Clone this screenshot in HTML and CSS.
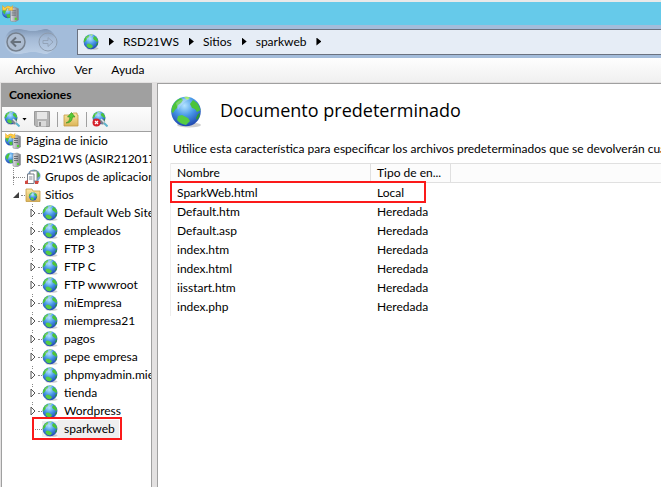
FILE: index.html
```html
<!DOCTYPE html>
<html lang="es">
<head>
<meta charset="utf-8">
<title>Administrador de Internet Information Services</title>
<link rel="stylesheet" href="styles.css">
</head>
<body>
<svg class="defs" aria-hidden="true">
  <defs>
    <radialGradient id="sea" cx="0.45" cy="0.3" r="0.75">
      <stop offset="0" stop-color="#b4e4ff"/><stop offset="0.45" stop-color="#4a9ae8"/><stop offset="1" stop-color="#1a3ca8"/>
    </radialGradient>
    <linearGradient id="folder" x1="0" y1="0" x2="0" y2="1">
      <stop offset="0" stop-color="#fbe9a4"/><stop offset="1" stop-color="#dcb558"/>
    </linearGradient>
    <linearGradient id="tower" x1="0" y1="0" x2="1" y2="0">
      <stop offset="0" stop-color="#e0e2e6"/><stop offset="1" stop-color="#777b82"/>
    </linearGradient>
    <linearGradient id="pill" x1="0" y1="0" x2="0" y2="1">
      <stop offset="0" stop-color="#7f97b6"/><stop offset="0.35" stop-color="#a3b9d5"/><stop offset="1" stop-color="#bccfe6"/>
    </linearGradient>
    <symbol id="globe" viewBox="0 0 32 32">
      <ellipse cx="19" cy="29" rx="12" ry="2.500" fill="#888" opacity=".4"/>
      <circle cx="16" cy="15.500" r="14.800" fill="url(#sea)"/>
      <path d="M2 11Q5 4 11 2L13 4 11 7 8 9 7 12 5 14 3 17 1.500 16Z" fill="#4cc43a"/>
      <path d="M14 1Q18 0 20 2L17 4Z" fill="#a4ec6c"/>
      <path d="M23 4Q27 6 29 10L30.500 14 27 16 25 13 22 12 20 8Z" fill="#4cc43a"/>
      <path d="M28 18L30 17Q30 21 27 24L26 22Z" fill="#2f9c2a"/>
      <path d="M8 20L12 19 18 22 20 25 16 29Q10 28 7 24Z" fill="#56cc42"/>
      <path d="M6 7Q12 1 20 3Q12 6 8 14Z" fill="#fff" opacity=".25"/>
    </symbol>
    <symbol id="server" viewBox="0 0 16 16">
      <circle cx="5.500" cy="7" r="5.500" fill="url(#sea)"/>
      <path d="M.3 6L3 2.500 5 2.500 4 5 2.500 9Z M4 9L7.500 8.500V12L5 12Z" fill="#4cc43a"/>
      <path d="M8 3L12 2 15.500 3.500V14L12 16 8 15Z" fill="url(#tower)" stroke="#8a8e94" stroke-width=".6"/>
      <path d="M9 5.500H13M9 7.500H13M9 9.500H13" stroke="#555b62" stroke-width=".8"/>
      <rect x="12" y="12" width="2" height="2" fill="#51d52b"/>
    </symbol>
    <symbol id="home" viewBox="0 0 16 16">
      <use href="#server"/>
      <path d="M.5 .5L2.500 2.500Q5.500 -.5 8.500 2L10 .5V5H5.500L7 3.500Q5 2.500 3.500 4L4.500 5H.5Z" fill="#ffcf45" stroke="#e09a18" stroke-width=".4"/>
    </symbol>
    <symbol id="plug" viewBox="0 0 16 16">
      <use href="#globe" width="14" height="14"/>
      <path d="M8.500 9L12 12" stroke="#7c858f" stroke-width="4"/><path d="M9 8L12.500 11.500" stroke="#dde2e8" stroke-width="1.500"/>
      <path d="M12 12L15.500 15.500" stroke="#5fb4cc" stroke-width="2"/>
    </symbol>
    <symbol id="expand" viewBox="0 0 6 10"><path d="M1 1L5 5 1 9Z" fill="#fff" stroke="#555"/></symbol>
  </defs>
</svg>

<div class="titlebar"><svg class="app-icon"><use href="#home"/></svg></div>

<header class="navbar">
  <div class="history">
    <svg class="pill" viewBox="0 0 56 28" aria-hidden="true"><path d="M13 1C20 1 22 3 29 3S37 1 43 1A13 13 0 0 1 43 26C37 26 35 24 29 24S20 26 13 26A12.500 12.500 0 0 1 13 1Z" fill="url(#pill)"/></svg>
    <button class="round" aria-label="Atrás"><svg viewBox="0 0 20 20"><circle cx="10" cy="10" r="9" fill="#adbcd0" stroke="#76808d" stroke-width="1.500"/><path d="M15 10H6M10 5.500L5.500 10 10 14.500" fill="none" stroke="#68717c" stroke-width="2"/></svg></button>
    <button class="round" aria-label="Adelante"><svg viewBox="0 0 20 20"><circle cx="10" cy="10" r="9" fill="none" stroke="#8e9cae"/><path d="M5 8.500H10V5.500L15 10 10 14.500V11.500H5Z" fill="none" stroke="#93a3b8"/></svg></button>
  </div>
  <nav class="address" aria-label="Ruta">
    <svg class="icon"><use href="#globe"/></svg><i class="arrow"></i>
    <a href="#server">RSD21WS</a><i class="arrow"></i>
    <a href="#sites">Sitios</a><i class="arrow"></i>
    <a href="#sparkweb">sparkweb</a><i class="arrow"></i>
  </nav>
</header>

<div class="menubar">
  <button>Archivo</button><button>Ver</button><button>Ayuda</button>
</div>

<div class="workspace">
  <aside class="connections">
    <h2>Conexiones</h2>
    <div class="toolbar">
      <button aria-label="Conectar"><svg class="icon"><use href="#plug"/></svg><i class="caret"></i></button>
      <button aria-label="Guardar"><svg class="icon" viewBox="0 0 16 16"><path d="M.5 .5H15.500V15.500H2L.5 14Z" fill="#b4b4b4" stroke="#9a9a9a"/><rect x="3" y="1" width="10" height="7" fill="#e6e6e6"/><rect x="4" y="10" width="8" height="5.500" fill="#dadada"/><rect x="5" y="11" width="2" height="4" fill="#909090"/></svg></button>
      <i class="sep"></i>
      <button aria-label="Subir"><svg class="icon" viewBox="0 0 16 16"><path d="M1 4H8L10 2H14V4H15V15H1Z" fill="url(#folder)" stroke="#c39a45" stroke-width=".8"/><path d="M3 12Q7 11 7 6H4.500L8.500 1.500 12 6H9.500Q9 12 3 12Z" fill="#58c936" stroke="#2f8c1c" stroke-width=".6"/></svg></button>
      <i class="sep"></i>
      <button aria-label="Desconectar"><svg class="icon" viewBox="0 0 16 16"><use href="#plug"/><circle cx="4.500" cy="11.500" r="4" fill="#d5202a"/><path d="M3 10L6 13M6 10L3 13" stroke="#fff" stroke-width="1.300"/></svg></button>
    </div>
    <ul class="tree">
      <li class="top"><svg class="icon"><use href="#home"/></svg><span>Página de inicio</span></li>
      <li class="top"><svg class="icon"><use href="#server"/></svg><span>RSD21WS (ASIR212017\Administrador)</span></li>
      <li class="group branch"><i class="dots"></i><svg class="icon" viewBox="0 0 16 16"><circle cx="9" cy="7" r="6.500" fill="#74a9dc"/><path d="M9 1Q14 2 15 7L12 9Z" fill="#55b540"/><path d="M5 2H12V12H5Z" fill="#fff" stroke="#858b94"/><path d="M2.500 5H9V14.500H2.500Z" fill="#fff" stroke="#777d87"/><path d="M4 8H7.500M4 10H7.500" stroke="#858b94"/><path d="M0 12L3 11V15H0ZM10 12H14L13 15H10Z" fill="#d04a42"/></svg><span>Grupos de aplicaciones</span></li>
      <li class="group"><i class="open"></i><i class="dots"></i><svg class="icon" viewBox="0 0 16 16"><path d="M1 4V2H7L8 4H15V14.500H1Z" fill="url(#folder)" stroke="#c39a45" stroke-width=".8"/><use href="#globe" x="3.500" y="5" width="9" height="9"/></svg><span>Sitios</span></li>
      <li class="site"><svg class="closed"><use href="#expand"/></svg><i class="dots"></i><svg class="icon"><use href="#globe"/></svg><span>Default Web Site</span></li>
      <li class="site"><svg class="closed"><use href="#expand"/></svg><i class="dots"></i><svg class="icon"><use href="#globe"/></svg><span>empleados</span></li>
      <li class="site"><svg class="closed"><use href="#expand"/></svg><i class="dots"></i><svg class="icon"><use href="#globe"/></svg><span>FTP 3</span></li>
      <li class="site"><svg class="closed"><use href="#expand"/></svg><i class="dots"></i><svg class="icon"><use href="#globe"/></svg><span>FTP C</span></li>
      <li class="site"><svg class="closed"><use href="#expand"/></svg><i class="dots"></i><svg class="icon"><use href="#globe"/></svg><span>FTP wwwroot</span></li>
      <li class="site"><svg class="closed"><use href="#expand"/></svg><i class="dots"></i><svg class="icon"><use href="#globe"/></svg><span>miEmpresa</span></li>
      <li class="site"><svg class="closed"><use href="#expand"/></svg><i class="dots"></i><svg class="icon"><use href="#globe"/></svg><span>miempresa21</span></li>
      <li class="site"><svg class="closed"><use href="#expand"/></svg><i class="dots"></i><svg class="icon"><use href="#globe"/></svg><span>pagos</span></li>
      <li class="site"><svg class="closed"><use href="#expand"/></svg><i class="dots"></i><svg class="icon"><use href="#globe"/></svg><span>pepe empresa</span></li>
      <li class="site"><svg class="closed"><use href="#expand"/></svg><i class="dots"></i><svg class="icon"><use href="#globe"/></svg><span>phpmyadmin.miempresa</span></li>
      <li class="site"><svg class="closed"><use href="#expand"/></svg><i class="dots"></i><svg class="icon"><use href="#globe"/></svg><span>tienda</span></li>
      <li class="site"><svg class="closed"><use href="#expand"/></svg><i class="dots"></i><svg class="icon"><use href="#globe"/></svg><span>Wordpress</span></li>
      <li class="site selected"><i class="dots"></i><svg class="icon"><use href="#globe"/></svg><span>sparkweb</span><i class="frame"></i></li>
    </ul>
  </aside>

  <main class="feature">
    <div class="heading"><svg class="big-icon"><use href="#globe"/></svg><h1>Documento predeterminado</h1></div>
    <p>Utilice esta característica para especificar los archivos predeterminados que se devolverán cuando</p>
    <div class="list">
      <table>
        <thead><tr><th class="name">Nombre</th><th class="type">Tipo de en...</th><th></th></tr></thead>
        <tbody>
          <tr><td>SparkWeb.html</td><td>Local</td><td></td></tr>
          <tr><td>Default.htm</td><td>Heredada</td><td></td></tr>
          <tr><td>Default.asp</td><td>Heredada</td><td></td></tr>
          <tr><td>index.htm</td><td>Heredada</td><td></td></tr>
          <tr><td>index.html</td><td>Heredada</td><td></td></tr>
          <tr><td>iisstart.htm</td><td>Heredada</td><td></td></tr>
          <tr><td>index.php</td><td>Heredada</td><td></td></tr>
        </tbody>
      </table>
      <i class="frame"></i>
    </div>
  </main>
</div>
</body>
</html>
```

FILE: styles.css
```css
* { box-sizing: border-box; }
body {
  margin: 0;
  min-height: 100vh;
  display: flex;
  flex-direction: column;
  overflow: hidden;
  background: #f0f0f0;
  color: #000;
  font: 12px/18px Lato, "Open Sans", sans-serif;
}
button { padding: 0; border: 0; background: none; color: inherit; font: inherit; display: flex; align-items: center; }
a { color: inherit; text-decoration: none; }
svg, i { display: block; flex: none; }
.defs { position: absolute; width: 0; height: 0; }
.icon { width: 16px; height: 16px; }

.titlebar { height: 25px; padding: 3px 2px; border-top: 2px solid #e9e9e9; background: #66caea; }
.app-icon { width: 17px; height: 17px; }

.navbar { height: 33px; display: flex; align-items: center; background: #a3bcda; }
.history { position: relative; flex: none; width: 77px; height: 28px; display: flex; align-items: center; gap: 12px; padding-left: 6px; }
.pill { position: absolute; left: 4px; top: 0; width: 56px; height: 28px; }
.round { position: relative; }
.round svg { width: 20px; height: 20px; }
.address { flex: 1; height: 26px; display: flex; align-items: center; padding-left: 5px; border: 1px solid #6b7280; border-right: 0; background: #e6edf6; }
.arrow { width: 5px; height: 8px; margin: 0 9px 0 10px; background: #000; clip-path: polygon(0 0, 100% 50%, 0 100%); }

.menubar { height: 24px; display: flex; align-items: center; gap: 19px; padding-left: 15px; background: linear-gradient(#fefefe, #f0f0f0); }

.workspace { flex: 1; display: flex; gap: 5px; padding: 1px 0 0 1px; background: #e3e1e1; }
.connections { flex: none; width: 151px; display: flex; flex-direction: column; border: 1px solid #a0a0a0; border-width: 0 1px; background: #fff; }
.connections h2 { margin: 0; padding: 0 7px; background: #a0a0a0; font-size: 12px; line-height: 24px; }
.toolbar { height: 25px; display: flex; align-items: center; gap: 7px; padding-left: 2px; border-bottom: 1px solid #a0a0a0; background: linear-gradient(#fcfcfc, #f0f0f0); }
.caret { width: 5px; height: 3px; margin-left: 2px; background: #000; clip-path: polygon(0 0, 100% 0, 50% 100%); }
.sep { width: 1px; height: 15px; background: #a0a0a0; }
.toolbar .sep + button { margin-left: -2px; }

.tree { flex: 1; margin: 0; padding: 0; list-style: none; overflow: hidden; }
.tree li { position: relative; height: 18px; display: flex; align-items: center; white-space: nowrap; }
.tree span { padding-left: 5px; }
.dots { flex: none; width: 12px; border-top: 1px dotted #888; }
.top { padding-left: 3px; }
.group { padding-left: 11px; }
.group span { padding-left: 4px; }
.group, .site { background: repeating-linear-gradient(#888 0 1px, transparent 1px 2px) 11px 0 / 1px 0 no-repeat; }
.branch { background-size: 1px 100%; }
.open { width: 6px; height: 6px; background: #404040; clip-path: polygon(100% 0, 100% 100%, 0 100%); }
.open + .dots { width: 4px; margin-left: 2px; }
.site { padding-left: 28px; background-position: 30px 0; background-size: 1px 4px; }
.closed { width: 6px; height: 10px; }
.closed + .dots { width: 4px; margin-left: 2px; }
.site.selected { padding-left: 30px; background: none; }
.selected .dots { width: 10px; }
.selected .icon, .selected span { background-color: #efefef; }
.site span { padding-left: 6px; }
.selected span { padding-right: 4px; }
.frame { position: absolute; border: 2px solid #fb1a1a; }
.selected .frame { left: 30px; top: -3px; width: 90px; height: 23px; }

.feature { flex: 1; min-width: 0; overflow: hidden; padding: 12px 0 0 12px; border: 1px solid #a0a0a0; border-width: 1px 0 0 1px; background: #fff; }
.heading { display: flex; align-items: flex-start; gap: 18px; }
.big-icon { width: 32px; height: 32px; }
h1 { margin: 0; font-family: "Open Sans", sans-serif; font-size: 18px; line-height: 28px; font-weight: 400; }
p { margin: 12px 0 5px 3px; white-space: nowrap; }
.list { position: relative; border-left: 1px solid #eee; }
table { width: 100%; border-collapse: separate; border-spacing: 0; table-layout: fixed; }
th, td { height: 19px; padding: 0 6px; text-align: left; font-weight: 400; line-height: 18px; white-space: nowrap; }
th { border: 1px solid #e0e0e0; border-left: 0; background: #fcfcfc; }
th:last-child { border-right: 0; }
.name { width: 200px; }
.type { width: 80px; }
.list .frame { left: -1px; top: 18px; width: 256px; height: 22px; }
```
